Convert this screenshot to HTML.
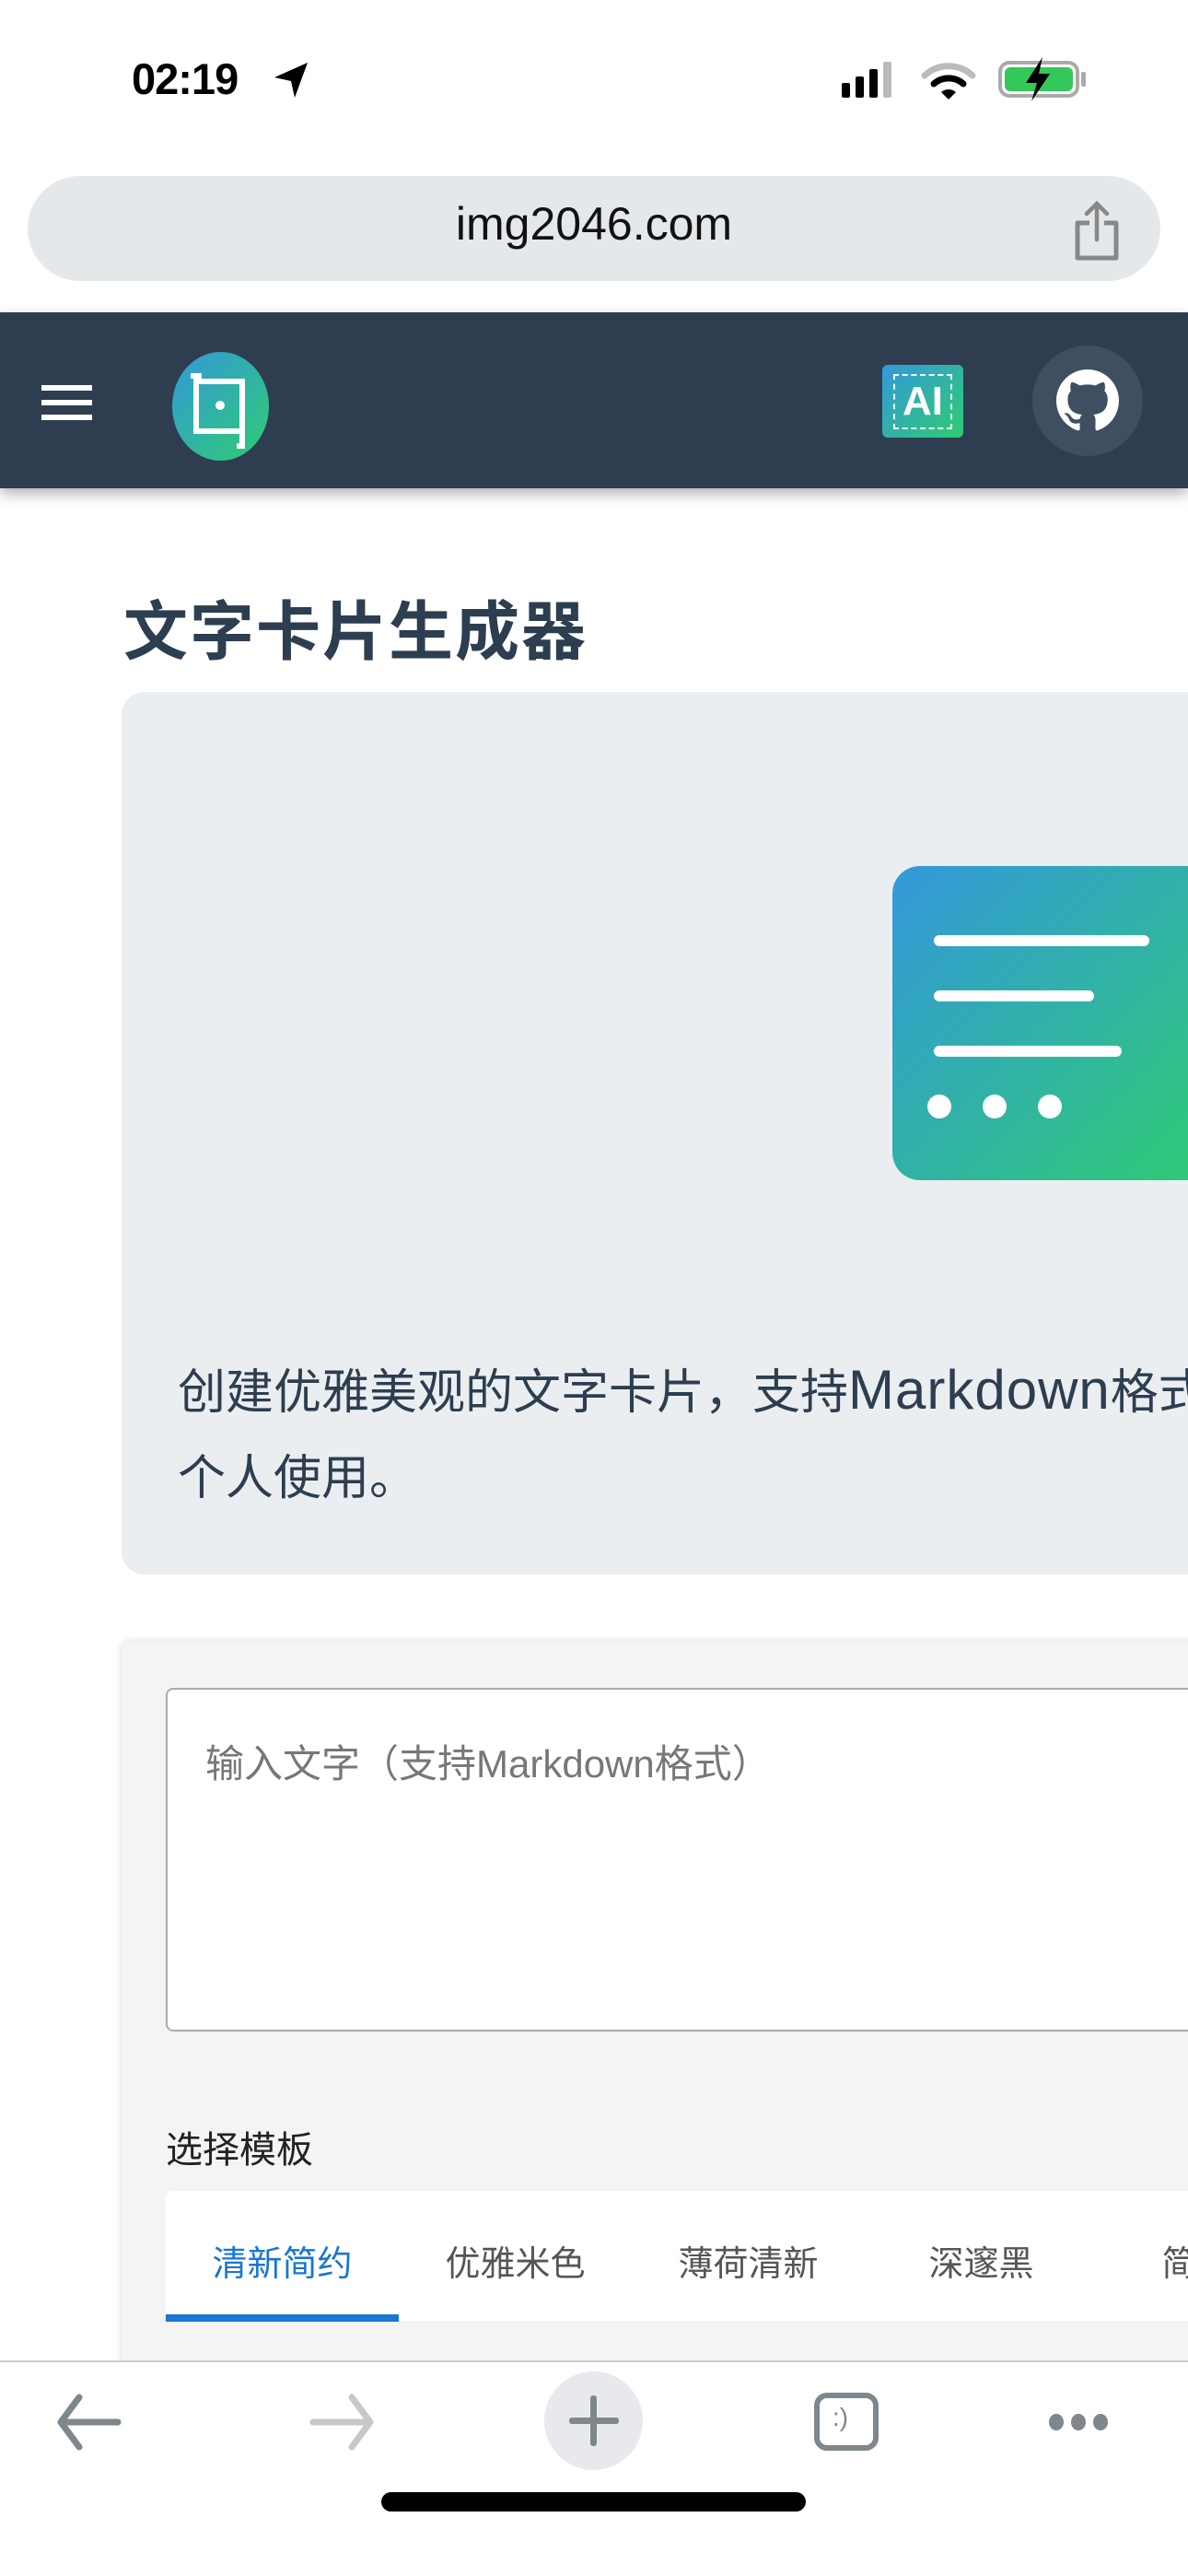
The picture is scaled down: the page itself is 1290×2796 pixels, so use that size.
<!DOCTYPE html>
<html><head><meta charset="utf-8"><style>
*{margin:0;padding:0;box-sizing:border-box}
html,body{width:1290px;height:2796px;overflow:hidden}
body{background:#fff;position:relative;font-family:"Liberation Sans","Noto Sans CJK SC",sans-serif}
#w{position:absolute;left:0;top:0;width:1290px;height:2796px;overflow:hidden}
.abs{position:absolute}
</style></head><body><div id="w">
<!-- status bar -->
<div class="abs" style="left:143px;top:58px;font-size:47px;font-weight:bold;color:#000;letter-spacing:-1px">02:19</div>
<svg class="abs" style="left:294px;top:64px" width="46" height="46" viewBox="0 0 46 46"><path d="M40 4 L4 20 L22 24 L26 42 Z" fill="#000"/></svg>
<svg class="abs" style="left:912px;top:66px" width="70" height="42"><rect x="2" y="24" width="9" height="16" rx="2" fill="#000"/><rect x="17" y="17" width="9" height="23" rx="2" fill="#000"/><rect x="32" y="9" width="9" height="31" rx="2" fill="#000"/><rect x="47" y="1" width="9" height="39" rx="2" fill="#bbb"/></svg>
<svg class="abs" style="left:1000px;top:64px" width="60" height="46" viewBox="0 0 60 46"><path d="M4 18 A38 38 0 0 1 56 18" stroke="#bbb" stroke-width="7" fill="none" stroke-linecap="round"/><path d="M14 27 A24 24 0 0 1 46 27" stroke="#000" stroke-width="7" fill="none" stroke-linecap="round"/><path d="M22 36 L30 44 L38 36 A12 12 0 0 0 22 36Z" fill="#000"/></svg>
<div class="abs" style="left:1084px;top:66px;width:88px;height:40px;border:4px solid #aaa;border-radius:12px;padding:3px"><div style="width:100%;height:100%;background:#34c759;border-radius:6px"></div></div>
<div class="abs" style="left:1174px;top:78px;width:5px;height:16px;background:#aaa;border-radius:2px"></div>
<svg class="abs" style="left:1106px;top:60px" width="40" height="52" viewBox="0 0 40 52"><path d="M26 2 L8 30 L20 30 L14 50 L34 20 L22 20 Z" fill="#000"/></svg>
<!-- url bar -->
<div class="abs" style="left:30px;top:191px;width:1230px;height:114px;background:#e5e8eb;border-radius:57px"></div>
<div class="abs" style="left:0;width:1290px;top:214px;text-align:center;font-size:50px;color:#111">img2046.com</div>
<svg class="abs" style="left:1162px;top:218px" width="58" height="66" viewBox="0 0 58 66"><path d="M21 24 H8 V62 H50 V24 H37" stroke="#888" stroke-width="5" fill="none" stroke-linejoin="round"/><path d="M29 42 V4 M18 14 L29 3 L40 14" stroke="#888" stroke-width="4.5" fill="none" stroke-linecap="round"/></svg>
<!-- nav -->
<div class="abs" style="left:0;top:339px;width:1290px;height:191px;background:#2e3e50;box-shadow:0 6px 14px rgba(0,0,0,0.3)"></div>
<div class="abs" style="left:45px;top:418px;width:55px;height:6px;background:#fff"></div>
<div class="abs" style="left:45px;top:434px;width:55px;height:6px;background:#fff"></div>
<div class="abs" style="left:45px;top:450px;width:55px;height:6px;background:#fff"></div>
<div class="abs" style="left:187px;top:382px;width:105px;height:118px;border-radius:50%;background:linear-gradient(135deg,#3498db,#2ecc71)"></div>
<svg class="abs" style="left:205px;top:400px" width="70" height="90" viewBox="0 0 70 90"><path d="M8 8 V68 H58 V14 H8" stroke="#fff" stroke-width="6" fill="none"/><path d="M2 8 H14 M58 68 V84 L52 84" stroke="#fff" stroke-width="6" fill="none"/><circle cx="34" cy="40" r="5" fill="#fff"/></svg>
<div class="abs" style="left:958px;top:396px;width:88px;height:79px;border-radius:6px;background:linear-gradient(135deg,#3498db,#2ecc71)"></div>
<div class="abs" style="left:970px;top:406px;width:64px;height:60px;border:2px dashed #fff"></div>
<div class="abs" style="left:958px;top:407px;width:88px;text-align:center;color:#fff;font-weight:bold;font-size:44px;line-height:58px">AI</div>
<div class="abs" style="left:1121px;top:375px;width:120px;height:120px;border-radius:50%;background:#3f4e60"></div>
<svg class="abs" style="left:1147px;top:401px" width="68" height="68" viewBox="0 0 16 16"><path fill="#fff" d="M8 0C3.58 0 0 3.58 0 8c0 3.54 2.29 6.53 5.47 7.59.4.07.55-.17.55-.38 0-.19-.01-.82-.01-1.49-2.01.37-2.53-.49-2.69-.94-.09-.23-.48-.94-.82-1.13-.28-.15-.68-.52-.01-.53.63-.01 1.08.58 1.23.82.72 1.21 1.87.87 2.33.66.07-.52.28-.87.51-1.07-1.78-.2-3.64-.89-3.64-3.95 0-.87.31-1.59.82-2.15-.08-.2-.36-1.02.08-2.12 0 0 .67-.21 2.2.82.64-.18 1.32-.27 2-.27.68 0 1.36.09 2 .27 1.53-1.04 2.2-.82 2.2-.82.44 1.1.16 1.92.08 2.12.51.56.82 1.27.82 2.15 0 3.07-1.87 3.75-3.65 3.95.29.25.54.73.54 1.48 0 1.07-.01 1.93-.01 2.2 0 .21.15.46.55.38A8.013 8.013 0 0016 8c0-4.42-3.58-8-8-8z"/></svg>
<!-- title -->
<div class="abs" style="left:134px;top:630px;font-size:70px;font-weight:bold;color:#2c3e50;letter-spacing:2px">文字卡片生成器</div>
<!-- hero -->
<div class="abs" style="left:132px;top:751px;width:1200px;height:958px;background:#ebeef0;border-radius:25px"></div>
<div class="abs" style="left:969px;top:940px;width:360px;height:341px;border-radius:30px;background:linear-gradient(135deg,#3498db,#2ecc71)"></div>
<div class="abs" style="left:1014px;top:1015px;width:234px;height:12px;border-radius:6px;background:#fff"></div>
<div class="abs" style="left:1014px;top:1075px;width:174px;height:12px;border-radius:6px;background:#fff"></div>
<div class="abs" style="left:1014px;top:1135px;width:204px;height:12px;border-radius:6px;background:#fff"></div>
<div class="abs" style="left:1007px;top:1188px;width:26px;height:26px;border-radius:50%;background:#fff"></div>
<div class="abs" style="left:1067px;top:1188px;width:26px;height:26px;border-radius:50%;background:#fff"></div>
<div class="abs" style="left:1127px;top:1188px;width:26px;height:26px;border-radius:50%;background:#fff"></div>
<div class="abs" style="left:193px;top:1462px;font-size:52px;line-height:93px;color:#2c3e50;white-space:nowrap">创建优雅美观的文字卡片，支持<span style="font-size:60px;letter-spacing:1px">Markdown</span>格式<br>个人使用。</div>
<!-- form card -->
<div class="abs" style="left:132px;top:1781px;width:1200px;height:900px;background:#f4f4f4;border-radius:10px;box-shadow:0 0 8px rgba(0,0,0,0.15)"></div>
<div class="abs" style="left:180px;top:1832px;width:1150px;height:373px;background:#fff;border:2px solid #aaa;border-radius:8px"></div>
<div class="abs" style="left:223px;top:1881px;font-size:42px;color:#777;white-space:nowrap">输入文字（支持Markdown格式）</div>
<div class="abs" style="left:180px;top:2301px;font-size:40px;color:#222">选择模板</div>
<div class="abs" style="left:180px;top:2378px;width:1150px;height:141px;background:#fff;border-radius:8px 0 0 0"></div>
<div class="abs" style="left:180px;top:2512px;width:253px;height:8px;background:#1976d2"></div>
<div class="abs" style="left:180px;top:2426px;width:1110px;height:60px;overflow:hidden;font-size:38px;color:#555;white-space:nowrap">
<span class="abs" style="left:0;width:253px;text-align:center;color:#1976d2">清新简约</span>
<span class="abs" style="left:253px;width:253px;text-align:center">优雅米色</span>
<span class="abs" style="left:506px;width:253px;text-align:center">薄荷清新</span>
<span class="abs" style="left:759px;width:253px;text-align:center">深邃黑</span>
<span class="abs" style="left:1012px;width:253px;text-align:center">简约白</span>
</div>
<!-- toolbar -->
<div class="abs" style="left:0;top:2562px;width:1290px;height:234px;background:#fff;border-top:2px solid #ccc"></div>
<svg class="abs" style="left:58px;top:2596px" width="76" height="66" viewBox="0 0 76 66"><path d="M70 33 H8 M28 6 L8 33 L28 60" stroke="#7e878c" stroke-width="7" fill="none" stroke-linecap="round" stroke-linejoin="round"/></svg>
<svg class="abs" style="left:334px;top:2596px" width="76" height="66" viewBox="0 0 76 66"><path d="M6 33 H68 M48 6 L68 33 L48 60" stroke="#c8c8c8" stroke-width="7" fill="none" stroke-linecap="round" stroke-linejoin="round"/></svg>
<div class="abs" style="left:591px;top:2574px;width:107px;height:107px;border-radius:50%;background:#e8e9ed"></div>
<div class="abs" style="left:618px;top:2624px;width:54px;height:7px;border-radius:3px;background:#7e878c"></div>
<div class="abs" style="left:641px;top:2600px;width:7px;height:55px;border-radius:3px;background:#7e878c"></div>
<div class="abs" style="left:884px;top:2597px;width:70px;height:63px;border:6px solid #7e878c;border-radius:14px"></div>
<div class="abs" style="left:904px;top:2608px;font-size:28px;color:#7e878c">:)</div>
<div class="abs" style="left:1139px;top:2620px;width:16px;height:18px;border-radius:50%;background:#7e878c"></div>
<div class="abs" style="left:1163px;top:2620px;width:16px;height:18px;border-radius:50%;background:#7e878c"></div>
<div class="abs" style="left:1187px;top:2620px;width:16px;height:18px;border-radius:50%;background:#7e878c"></div>
<div class="abs" style="left:414px;top:2705px;width:461px;height:21px;border-radius:11px;background:#000"></div>
</div></body></html>
